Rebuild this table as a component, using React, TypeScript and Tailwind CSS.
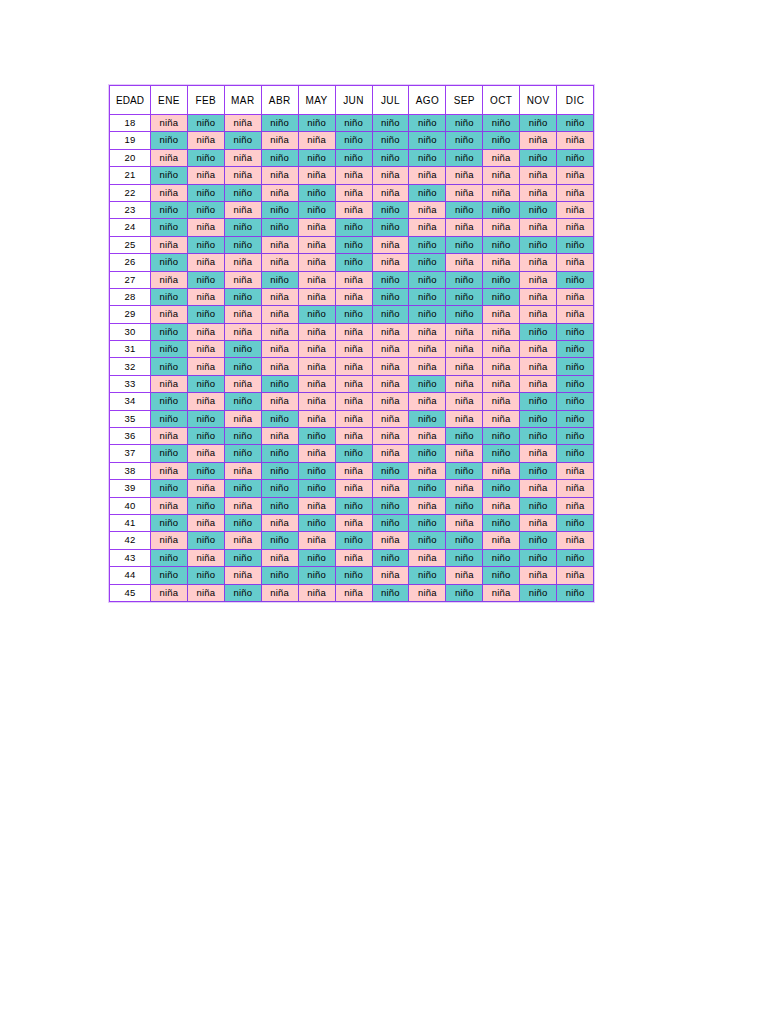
import React from "react";

const months = ["ENE", "FEB", "MAR", "ABR", "MAY", "JUN", "JUL", "AGO", "SEP", "OCT", "NOV", "DIC"];

const rows: [number, string][] = [
  [18, "AOAOOOOOOOOO"],
  [19, "OAOAAOOOOOAA"],
  [20, "AOAOOOOOOAOO"],
  [21, "OAAAAAAAAAAA"],
  [22, "AOOAOAAOAAAA"],
  [23, "OOAOOAOAOOOA"],
  [24, "OAOOAOOAAAAA"],
  [25, "AOOAAOAOOOOO"],
  [26, "OAAAAOAOAAAA"],
  [27, "AOAOAAOOOOAO"],
  [28, "OAOAAAOOOOAA"],
  [29, "AOAAOOOOOAAA"],
  [30, "OAAAAAAAAAOO"],
  [31, "OAOAAAAAAAAO"],
  [32, "OAOAAAAAAAAO"],
  [33, "AOAOAAAOAAAO"],
  [34, "OAOAAAAAAAOO"],
  [35, "OOAOAAAOAAOO"],
  [36, "AOOAOAAAOOOO"],
  [37, "OAOOAOAOAOAO"],
  [38, "AOAOOAOAOAOA"],
  [39, "OAOOOAAOAOAA"],
  [40, "AOAOAOOAOAOA"],
  [41, "OAOAOAOOAOAO"],
  [42, "AOAOAOAOOAOA"],
  [43, "OAOAOAOAOOOO"],
  [44, "OOAOOOAOAOAA"],
  [45, "AAOAAAOAOAOO"],
];

export default function App() {
  return (
    <div className="min-h-[1024px] w-[768px] bg-white pl-[109px] pt-[85px]" style={{ fontFamily: '"Liberation Sans", Arial, sans-serif' }}>
      <div className="grid w-[485px] grid-cols-[41px_repeat(12,minmax(0,1fr))] grid-rows-[29px_repeat(28,17.4px)] border-l border-t border-[#9b3cf2] shadow-[0_0_0_1px_#e3cdf9]">
        <div className="flex items-center justify-center border-b border-r border-[#9b3cf2] bg-white text-[10px] tracking-[0.1px] text-black">EDAD</div>
        {months.map((m) => (
          <div key={m} className="flex items-center justify-center border-b border-r border-[#9b3cf2] bg-white text-[10px] tracking-[0.4px] text-black">
            {m}
          </div>
        ))}
        {rows.map(([age, data]) => (
          <React.Fragment key={age}>
            <div className="flex items-center justify-center border-b border-r border-[#9b3cf2] bg-white text-[9.5px] tracking-[0.3px] text-black">{age}</div>
            {data.split("").map((c, i) => (
              <div
                key={i}
                className={
                  c === "O"
                    ? "flex items-center justify-center border-b border-r border-[#8a3ee8] bg-[#66cccc] text-[9.5px] tracking-[0.2px] text-black"
                    : "flex items-center justify-center border-b border-r border-[#8a3ee8] bg-[#ffcccc] text-[9.5px] tracking-[0.2px] text-black"
                }
              >
                {c === "O" ? "niño" : "niña"}
              </div>
            ))}
          </React.Fragment>
        ))}
      </div>
    </div>
  );
}
